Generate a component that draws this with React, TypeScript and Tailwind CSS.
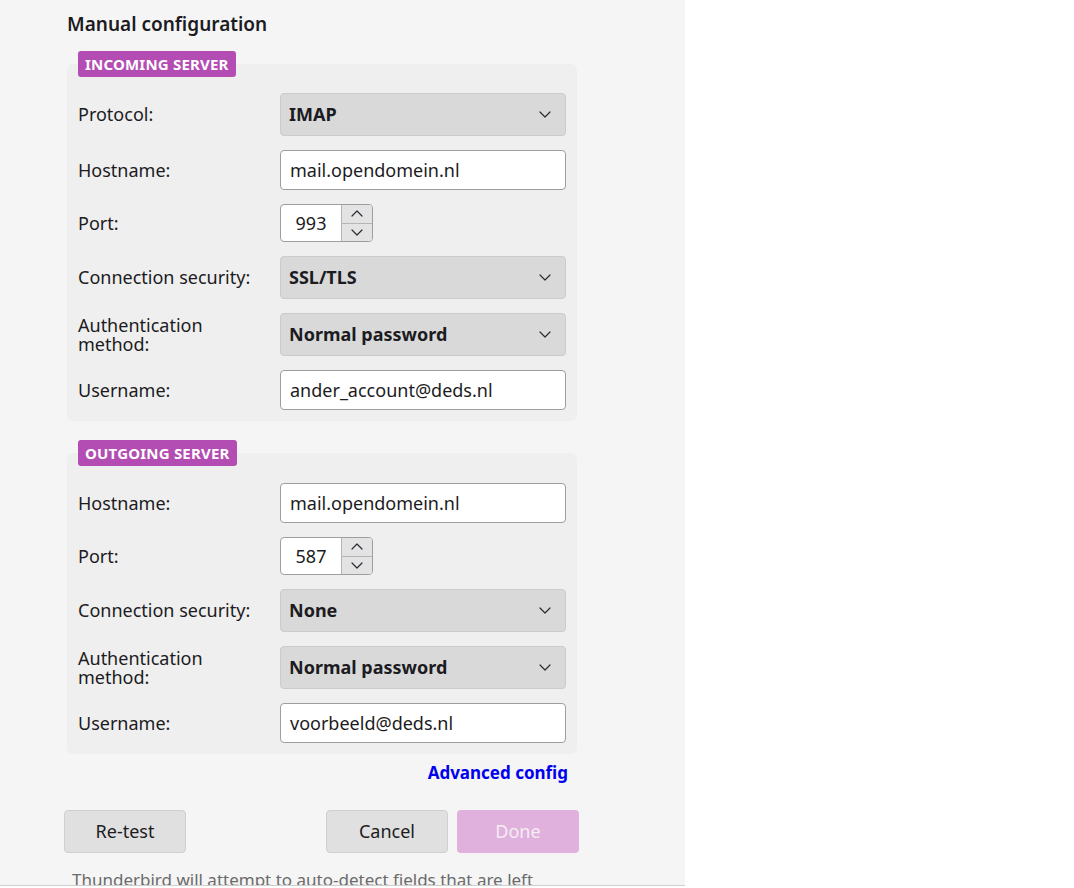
import React from "react";

const font = { fontFamily: '"Noto Sans", "Open Sans", sans-serif' };

const Chevron = ({ up = false }: { up?: boolean }) => (
  <svg width="12" height="7" viewBox="0 0 12 7" fill="none">
    <path
      d={up ? "M1 6 L6 1 L11 6" : "M1 1 L6 6 L11 1"}
      stroke="#2b2a33"
      strokeWidth="1.2"
      strokeLinecap="round"
      strokeLinejoin="round"
    />
  </svg>
);

const Select = ({ value }: { value: string }) => (
  <div className="flex h-[43px] w-[286px] items-center justify-between rounded-[4px] border border-[#cbcbcb] bg-[#d9d9d9] pl-[8px] pr-[14px]">
    <span className="text-[18px] font-bold text-[#1c1b22]">{value}</span>
    <Chevron />
  </div>
);

const TextInput = ({ value }: { value: string }) => (
  <div className="flex h-[40px] w-[286px] items-center rounded-[4px] border border-[#9e9e9e] bg-white px-[9px]">
    <span className="text-[18px] text-[#1c1b22]">{value}</span>
  </div>
);

const Spinner = ({ value }: { value: string }) => (
  <div className="flex h-[38px] w-[93px] overflow-hidden rounded-[4px] border border-[#9e9e9e] bg-white">
    <div className="flex w-[60px] items-center justify-center text-[18px] text-[#1c1b22]">
      {value}
    </div>
    <div className="flex flex-1 flex-col border-l border-[#b5b5b5] bg-[#e3e3e3]">
      <div className="flex flex-1 items-center justify-center border-b border-[#b5b5b5]">
        <Chevron up />
      </div>
      <div className="flex flex-1 items-center justify-center">
        <Chevron />
      </div>
    </div>
  </div>
);

type Row = { label: React.ReactNode; control: React.ReactNode };

const FieldRow = ({ label, control }: Row) => (
  <div className="flex items-center">
    <div className="w-[202px] text-[18px] leading-[19px] text-[#1c1b22]">{label}</div>
    {control}
  </div>
);

const Section = ({
  title,
  rows,
  top,
}: {
  title: string;
  rows: Row[];
  top: string;
}) => (
  <div>
    <div className="relative z-10 ml-[11px] inline-flex h-[26px] items-center rounded-[3px] bg-[#b34db3] px-[7px] text-[15px] font-bold tracking-[0.2px] text-white">
      {title}
    </div>
    <div
      className={`-mt-[13px] flex w-[510px] flex-col gap-[14px] rounded-[6px] bg-[#efefef] pb-[11px] pl-[11px] ${top}`}
    >
      {rows.map((r, i) => (
        <FieldRow key={i} {...r} />
      ))}
    </div>
  </div>
);

const authLabel = (
  <>
    Authentication
    <br />
    method:
  </>
);

export default function App() {
  const incoming: Row[] = [
    { label: "Protocol:", control: <Select value="IMAP" /> },
    { label: "Hostname:", control: <TextInput value="mail.opendomein.nl" /> },
    { label: "Port:", control: <Spinner value="993" /> },
    { label: "Connection security:", control: <Select value="SSL/TLS" /> },
    { label: authLabel, control: <Select value="Normal password" /> },
    { label: "Username:", control: <TextInput value="ander_account@deds.nl" /> },
  ];

  const outgoing: Row[] = [
    { label: "Hostname:", control: <TextInput value="mail.opendomein.nl" /> },
    { label: "Port:", control: <Spinner value="587" /> },
    { label: "Connection security:", control: <Select value="None" /> },
    { label: authLabel, control: <Select value="Normal password" /> },
    { label: "Username:", control: <TextInput value="voorbeeld@deds.nl" /> },
  ];

  return (
    <div className="flex h-[888px] w-full bg-white" style={font}>
      <div className="h-[886px] w-[685px] overflow-hidden border-b border-[#cfcfcf] bg-[#f5f5f5]">
        <div className="ml-[67px] pt-[11px]">
          <h2 className="text-[19px] font-semibold leading-[26px] text-[#1c1b22]">
            Manual configuration
          </h2>

          <div className="mt-[14px]">
            <Section title="INCOMING SERVER" rows={incoming} top="pt-[29px]" />
          </div>

          <div className="mt-[19px]">
            <Section title="OUTGOING SERVER" rows={outgoing} top="pt-[30px]" />
          </div>

          <div className="mt-[7px] flex w-[510px] justify-end pr-[9px]">
            <a className="text-[17px] font-bold leading-[24px] text-[#0000ee]">
              Advanced config
            </a>
          </div>

          <div className="-ml-[3px] mt-[25px] flex w-[515px] items-center">
            <button className="h-[43px] w-[122px] rounded-[4px] border border-[#cfcfcf] bg-[#e0e0e0] text-[18px] text-[#1c1b22]">
              Re-test
            </button>
            <div className="flex-1" />
            <button className="h-[43px] w-[122px] rounded-[4px] border border-[#cfcfcf] bg-[#e0e0e0] text-[18px] text-[#1c1b22]">
              Cancel
            </button>
            <button className="ml-[9px] h-[43px] w-[122px] rounded-[4px] bg-[#dfb1dc] text-[18px] text-[#f6ecf5]">
              Done
            </button>
          </div>

          <p className="ml-[5px] mt-[15px] text-[17px] leading-[24px] text-[#6b6b6b]">
            Thunderbird will attempt to auto-detect fields that are left
          </p>
        </div>
      </div>
    </div>
  );
}
